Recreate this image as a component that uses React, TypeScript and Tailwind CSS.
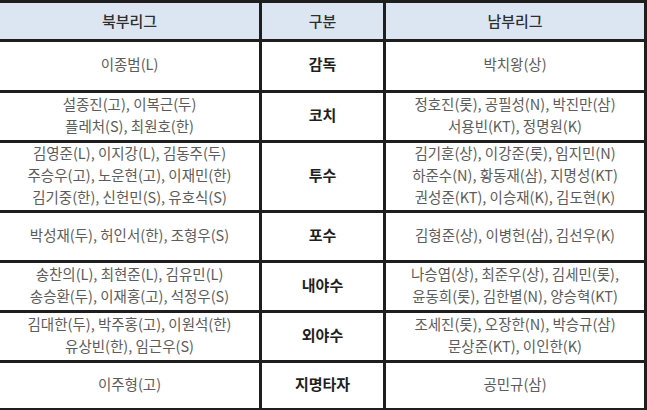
import React from 'react';

type Row = {
  north: string[];
  label: string;
  south: string[];
};

const rows: Row[] = [
  { north: ['이종범(L)'], label: '감독', south: ['박치왕(상)'] },
  {
    north: ['설종진(고), 이복근(두)', '플레처(S), 최원호(한)'],
    label: '코치',
    south: ['정호진(롯), 공필성(N), 박진만(삼)', '서용빈(KT), 정명원(K)'],
  },
  {
    north: ['김영준(L), 이지강(L), 김동주(두)', '주승우(고), 노운현(고), 이재민(한)', '김기중(한), 신헌민(S), 유호식(S)'],
    label: '투수',
    south: ['김기훈(상), 이강준(롯), 임지민(N)', '하준수(N), 황동재(삼), 지명성(KT)', '권성준(KT), 이승재(K), 김도현(K)'],
  },
  {
    north: ['박성재(두), 허인서(한), 조형우(S)'],
    label: '포수',
    south: ['김형준(상), 이병헌(삼), 김선우(K)'],
  },
  {
    north: ['송찬의(L), 최현준(L), 김유민(L)', '송승환(두), 이재홍(고), 석정우(S)'],
    label: '내야수',
    south: ['나승엽(상), 최준우(상), 김세민(롯),', '윤동희(롯), 김한별(N), 양승혁(KT)'],
  },
  {
    north: ['김대한(두), 박주홍(고), 이원석(한)', '유상빈(한), 임근우(S)'],
    label: '외야수',
    south: ['조세진(롯), 오장한(N), 박승규(삼)', '문상준(KT), 이인한(K)'],
  },
  { north: ['이주형(고)'], label: '지명타자', south: ['공민규(삼)'] },
];

const Names = ({ lines }: { lines: string[] }) => (
  <div className="flex flex-col items-center justify-center bg-white pb-[4px] text-center text-[14.5px] leading-[22px] text-[#5c5c5c]">
    {lines.map((l, i) => (
      <div key={i}>{l}</div>
    ))}
  </div>
);

export default function App() {
  return (
    <div
      className="grid w-[647px] grid-cols-[259px_121px_258px] grid-rows-[36px_48px_47px_67px_47px_47px_47px_45px] gap-[3px] bg-[#1e1e1e] py-[3px] pr-[3px]"
      style={{ fontFamily: '"Noto Sans CJK KR", "Noto Sans", sans-serif' }}
    >
      <div className="flex items-center justify-center bg-[#dce6f2] text-[15px] font-medium text-[#2e2e2e]">북부리그</div>
      <div className="flex items-center justify-center bg-[#dce6f2] text-[15px] font-medium text-[#2e2e2e]">구분</div>
      <div className="flex items-center justify-center bg-[#dce6f2] text-[15px] font-medium text-[#2e2e2e]">남부리그</div>
      {rows.map((r) => (
        <React.Fragment key={r.label}>
          <Names lines={r.north} />
          <div className="flex items-center justify-center bg-white pb-[3px] text-[15px] font-bold text-[#1e1e1e]">
            {r.label}
          </div>
          <Names lines={r.south} />
        </React.Fragment>
      ))}
    </div>
  );
}
